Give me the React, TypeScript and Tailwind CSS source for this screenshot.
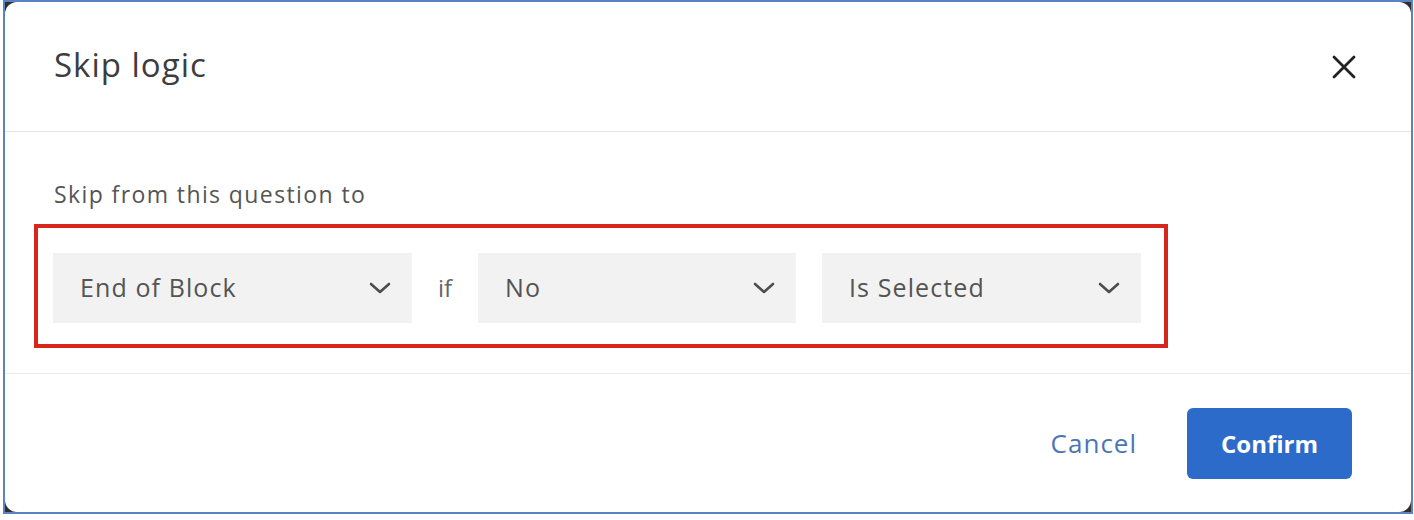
import React from "react";

function Chevron() {
    return (
        <svg width="22" height="14" viewBox="0 0 22 14" className="shrink-0">
            <path d="M2 3 L11 11 L20 3" fill="none" stroke="#4d4d4d" strokeWidth="2.6" strokeLinecap="round" strokeLinejoin="round" />
        </svg>
    );
}

function Select({ label, width }: { label: string; width: string }) {
    return (
        <div className={`${width} h-[70px] bg-[#f2f2f2] flex items-center justify-between pl-[27px] pr-[21px]`}>
            <span className="text-[25px] tracking-[1.1px] text-[#545454]">{label}</span>
            <Chevron />
        </div>
    );
}

export default function App() {
    return (
        <div className="w-[1414px] h-[520px] bg-white" style={{ fontFamily: "'Open Sans', 'Liberation Sans', sans-serif" }}>
            {/* frame around the captured dialog */}
            <div className="ml-[3px] w-[1410px] h-[514px] border-2 border-[#5b82c2] bg-[#2e2e2e]">
                <div className="w-full h-full bg-white rounded-[12px] flex flex-col">
                    {/* Header */}
                    <div className="h-[130px] shrink-0 flex items-center justify-between pl-[49px] pr-[55px] border-b border-[#e6e6e6]">
                        <h1 className="text-[33px] tracking-[1px] text-[#3d3d3d] pb-[3px]">Skip logic</h1>
                        <svg width="24" height="24" viewBox="0 0 24 24">
                            <path d="M2 2 L22 22 M22 2 L2 22" stroke="#222" strokeWidth="2.8" strokeLinecap="round" />
                        </svg>
                    </div>

                    {/* Body */}
                    <div className="pt-[46px] pb-[25px] border-b border-[#ececec]">
                        <p className="pl-[49px] text-[23px] tracking-[1.4px] leading-[32px] text-[#555]">Skip from this question to</p>
                        <div className="mt-[14px] ml-[29px] w-[1134px] border-4 border-[#d9261c] pt-[25px] pb-[21px] pl-[15px] flex items-center">
                            <Select label="End of Block" width="w-[359px]" />
                            <div className="w-[66px] h-[70px] flex items-center justify-center">
                                <span className="text-[24px] text-[#666]">if</span>
                            </div>
                            <Select label="No" width="w-[318px]" />
                            <div className="w-[26px]" />
                            <Select label="Is Selected" width="w-[319px]" />
                        </div>
                    </div>

                    {/* Footer */}
                    <div className="flex-1 flex items-start justify-end pt-[34px] pr-[59px]">
                        <button className="h-[71px] flex items-center text-[26px] tracking-[1px] text-[#4a76b4] mr-[50px]">Cancel</button>
                        <button className="w-[165px] h-[71px] rounded-[6px] bg-[#2c6bca] text-white text-[24px] font-bold">
                            Confirm
                        </button>
                    </div>
                </div>
            </div>
        </div>
    );
}
